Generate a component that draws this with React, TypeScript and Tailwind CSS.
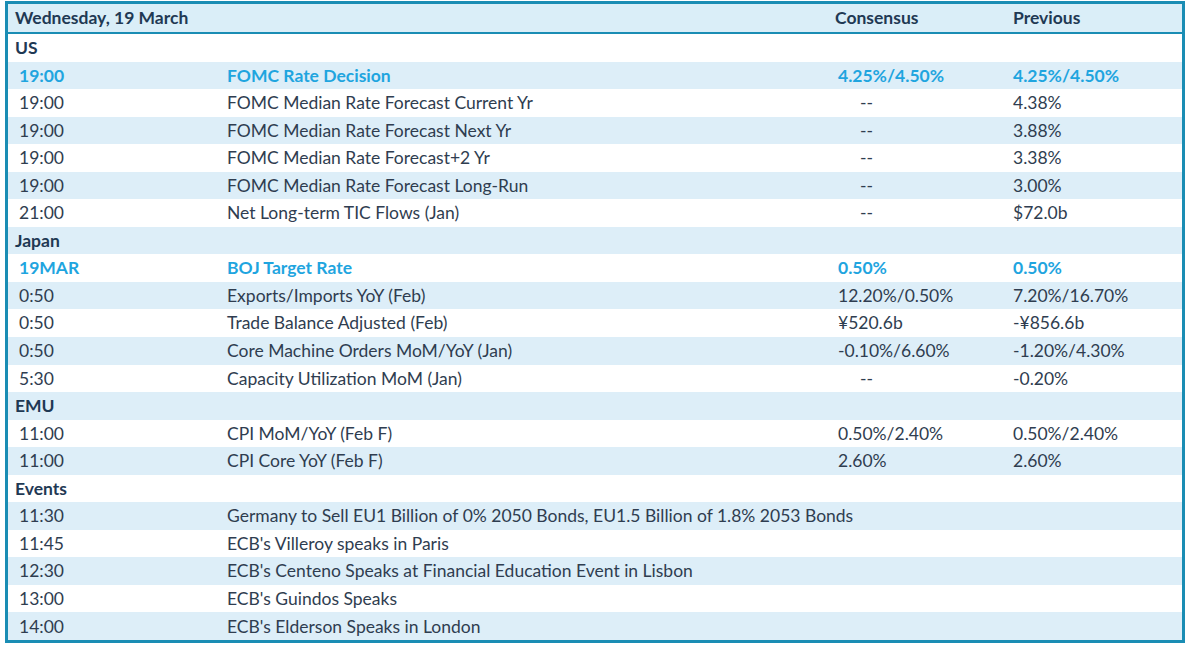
type Row =
  | { kind: 'section'; label: string }
  | { kind: 'item'; time: string; name: string; cons?: string; prev?: string; hi?: boolean };

const rows: Row[] = [
  { kind: 'section', label: 'US' },
  { kind: 'item', time: '19:00', name: 'FOMC Rate Decision', cons: '4.25%/4.50%', prev: '4.25%/4.50%', hi: true },
  { kind: 'item', time: '19:00', name: 'FOMC Median Rate Forecast Current Yr', cons: '--', prev: '4.38%' },
  { kind: 'item', time: '19:00', name: 'FOMC Median Rate Forecast Next Yr', cons: '--', prev: '3.88%' },
  { kind: 'item', time: '19:00', name: 'FOMC Median Rate Forecast+2 Yr', cons: '--', prev: '3.38%' },
  { kind: 'item', time: '19:00', name: 'FOMC Median Rate Forecast Long-Run', cons: '--', prev: '3.00%' },
  { kind: 'item', time: '21:00', name: 'Net Long-term TIC Flows (Jan)', cons: '--', prev: '$72.0b' },
  { kind: 'section', label: 'Japan' },
  { kind: 'item', time: '19MAR', name: 'BOJ Target Rate', cons: '0.50%', prev: '0.50%', hi: true },
  { kind: 'item', time: '0:50', name: 'Exports/Imports YoY (Feb)', cons: '12.20%/0.50%', prev: '7.20%/16.70%' },
  { kind: 'item', time: '0:50', name: 'Trade Balance Adjusted (Feb)', cons: '¥520.6b', prev: '-¥856.6b' },
  { kind: 'item', time: '0:50', name: 'Core Machine Orders MoM/YoY (Jan)', cons: '-0.10%/6.60%', prev: '-1.20%/4.30%' },
  { kind: 'item', time: '5:30', name: 'Capacity Utilization MoM (Jan)', cons: '--', prev: '-0.20%' },
  { kind: 'section', label: 'EMU' },
  { kind: 'item', time: '11:00', name: 'CPI MoM/YoY (Feb F)', cons: '0.50%/2.40%', prev: '0.50%/2.40%' },
  { kind: 'item', time: '11:00', name: 'CPI Core YoY (Feb F)', cons: '2.60%', prev: '2.60%' },
  { kind: 'section', label: 'Events' },
  { kind: 'item', time: '11:30', name: 'Germany to Sell EU1 Billion of 0% 2050 Bonds, EU1.5 Billion of 1.8% 2053 Bonds' },
  { kind: 'item', time: '11:45', name: "ECB's Villeroy speaks in Paris" },
  { kind: 'item', time: '12:30', name: "ECB's Centeno Speaks at Financial Education Event in Lisbon" },
  { kind: 'item', time: '13:00', name: "ECB's Guindos Speaks" },
  { kind: 'item', time: '14:00', name: "ECB's Elderson Speaks in London" },
];

export default function App() {
  return (
    <div className="min-h-[651px] bg-white pt-px pl-[5px] font-['Lato','Open_Sans',sans-serif] text-[17.5px] leading-none text-[#2f3d50]">
      <div className="w-[1180px] border-[3px] border-[#1a8db4]">
        {/* Header */}
        <div className="flex h-[30px] items-center border-b-2 border-[#1a8db4] bg-[#daeef8] pb-px font-bold text-[#1f3954]">
          <div className="w-[827px] pl-[7px]">Wednesday, 19 March</div>
          <div className="w-[178px]">Consensus</div>
          <div className="flex-1">Previous</div>
        </div>

        {rows.map((r, i) => {
          const bg = i % 2 === 1 ? 'bg-[#ddeef8]' : 'bg-white';
          if (r.kind === 'section') {
            return (
              <div key={i} className={`flex h-[27.55px] items-center pl-[7px] font-bold text-[#1f3954] ${bg}`}>
                {r.label}
              </div>
            );
          }
          const tone = r.hi ? 'font-bold text-[#1fa5df]' : '';
          return (
            <div key={i} className={`flex h-[27.55px] items-center ${bg} ${tone}`}>
              <div className="w-[219px] pl-[11px]">{r.time}</div>
              <div className="w-[611px] whitespace-nowrap">{r.name}</div>
              <div className={`w-[175px] ${r.cons === '--' ? 'pl-[22px]' : ''}`}>{r.cons}</div>
              <div className="flex-1">{r.prev}</div>
            </div>
          );
        })}
      </div>
    </div>
  );
}
